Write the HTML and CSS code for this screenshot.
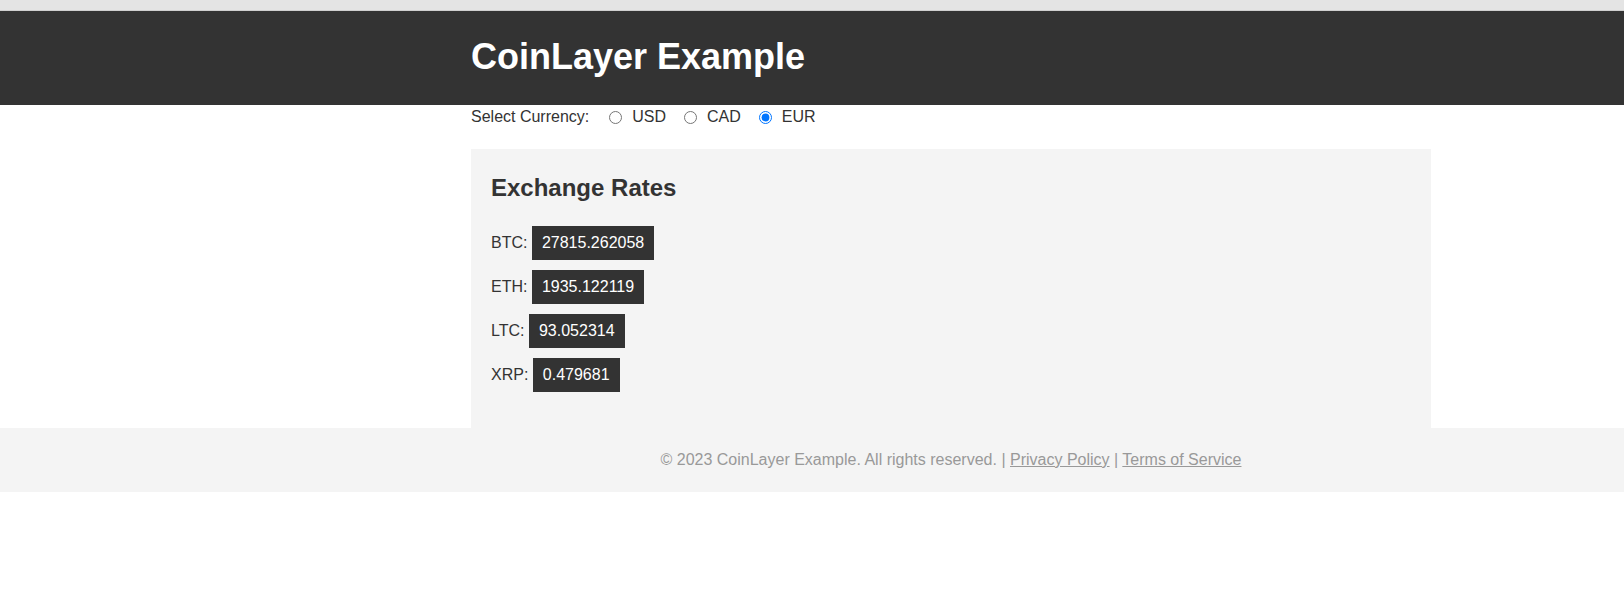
FILE: index.html
```html
<!DOCTYPE html>
<html lang="en">
<head>
<meta charset="utf-8">
<title>CoinLayer Example</title>
<link rel="stylesheet" href="styles.css">
</head>
<body>
<div class="topbar"></div>
<header class="site-header">
  <div class="container">
    <h1 class="title">CoinLayer Example</h1>
  </div>
</header>
<main class="container">
  <div class="currency">
    <span class="currency-label">Select Currency:</span>
    <label class="option"><input type="radio" name="cur" class="radio"><span>USD</span></label>
    <label class="option"><input type="radio" name="cur" class="radio"><span>CAD</span></label>
    <label class="option"><input type="radio" name="cur" class="radio" checked><span>EUR</span></label>
  </div>
  <section class="card">
    <h2 class="card-title">Exchange Rates</h2>
    <div class="rate">BTC: <span class="value">27815.262058</span></div>
    <div class="rate">ETH: <span class="value">1935.122119</span></div>
    <div class="rate">LTC: <span class="value">93.052314</span></div>
    <div class="rate">XRP: <span class="value">0.479681</span></div>
  </section>
</main>
<footer class="site-footer">
  <div class="container footer-inner">
    &copy; 2023 CoinLayer Example. All rights reserved. | <a href="#" class="flink">Privacy Policy</a> | <a href="#" class="flink">Terms of Service</a>
  </div>
</footer>
</body>
</html>
```
FILE: styles.css
```css
* { box-sizing: border-box; }
html, body {
  margin: 0;
  padding: 0;
  background: #fff;
  font-family: "Liberation Sans", Arial, sans-serif;
  font-size: 16px;
  color: #333;
}
.topbar {
  height: 11px;
  background: #e4e4e4;
  border-bottom: 1px solid #cfcfcf;
}
.container {
  width: 960px;
  margin-left: 471px;
}
.site-header {
  background: #333;
  height: 94px;
  padding-top: 25px;
}
.title {
  margin: 0;
  color: #fff;
  font-size: 36px;
  font-weight: bold;
  line-height: 41px;
}
.currency {
  display: flex;
  align-items: center;
  height: 22px;
  margin-top: 1px;
  line-height: 18px;
}
.currency-label {
  margin-right: 15px;
}
.option {
  display: flex;
  align-items: center;
  margin-right: 13px;
}
.radio {
  width: 13px;
  height: 13px;
  margin: 0 10px 0 5px;
}
.card {
  margin-top: 21px;
  background: #f4f4f4;
  padding: 25px 20px 36px;
}
.card-title {
  margin: 0 0 24px;
  font-size: 24px;
  line-height: 28px;
  font-weight: bold;
  color: #333;
}
.rate {
  display: flex;
  align-items: center;
  height: 34px;
  margin-bottom: 10px;
  white-space: pre;
}
.rate:last-child { margin-bottom: 0; }
.value {
  background: #333;
  color: #fff;
  padding: 8px 10px;
  line-height: 18px;
}
.site-footer {
  background: #f4f4f4;
  padding: 23px 0;
  height: 64px;
}
.footer-inner {
  text-align: center;
  color: #999;
  line-height: 18px;
}
.flink {
  color: #999;
  text-decoration: underline;
}
```
